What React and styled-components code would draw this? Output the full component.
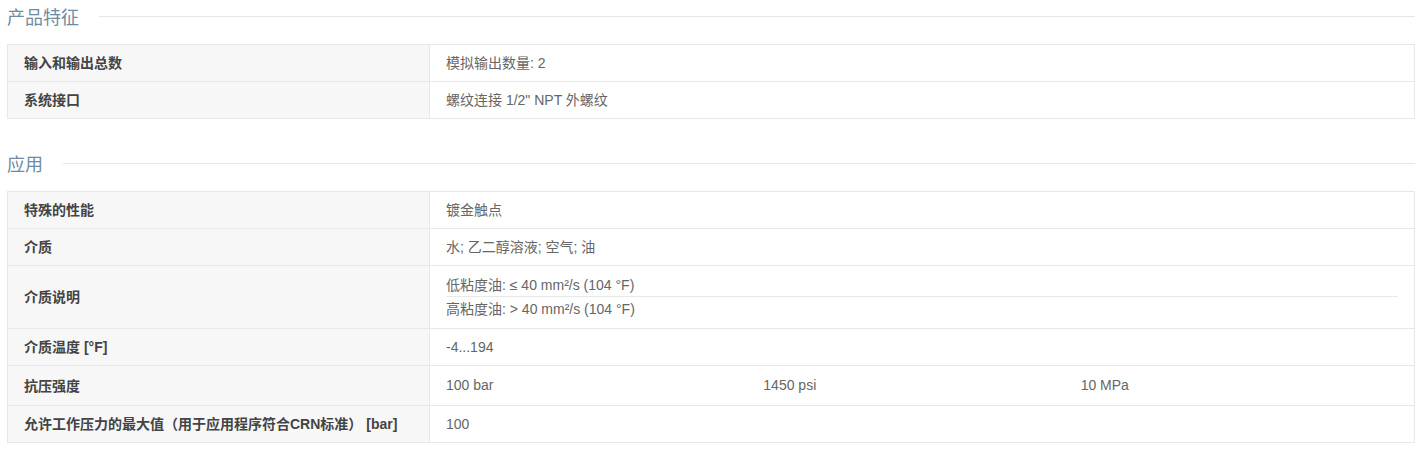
import styled, { createGlobalStyle } from "styled-components";

const GlobalStyle = createGlobalStyle`
  body {
    margin: 0;
    background: #fff;
    font-family: "Liberation Sans", "Noto Sans CJK SC", Arial, sans-serif;
  }
`;

const features = [
  { label: "输入和输出总数", values: ["模拟输出数量: 2"] },
  { label: "系统接口", values: ['螺纹连接 1/2" NPT 外螺纹'] },
];

const application = [
  { label: "特殊的性能", values: ["镀金触点"] },
  { label: "介质", values: ["水; 乙二醇溶液; 空气; 油"] },
  {
    label: "介质说明",
    values: ["低粘度油: ≤ 40 mm²/s (104 °F)", "高粘度油: > 40 mm²/s (104 °F)"],
  },
  { label: "介质温度 [°F]", values: ["-4...194"] },
  { label: "抗压强度", columns: ["100 bar", "1450 psi", "10 MPa"] },
  { label: "允许工作压力的最大值（用于应用程序符合CRN标准） [bar]", values: ["100"] },
];

const SpecTable = ({ rows }) => (
  <Table>
    {rows.map((row) => (
      <Row key={row.label}>
        <Label>{row.label}</Label>
        <Value>
          {row.columns ? (
            <Columns>
              {row.columns.map((c) => (
                <span key={c}>{c}</span>
              ))}
            </Columns>
          ) : row.values.length > 1 ? (
            row.values.map((v) => <SubValue key={v}>{v}</SubValue>)
          ) : (
            row.values[0]
          )}
        </Value>
      </Row>
    ))}
  </Table>
);

const App = () => {
  return (
    <Page>
      <GlobalStyle />
      <Section>
        <Heading>
          <span>产品特征</span>
        </Heading>
        <SpecTable rows={features} />
      </Section>
      <Section>
        <Heading>
          <span>应用</span>
        </Heading>
        <SpecTable rows={application} />
      </Section>
    </Page>
  );
};
export default App;

const Page = styled.div`
  width: 1408px;
  padding-left: 7px;
`;

const Section = styled.section`
  & + & {
    margin-top: 28px;
  }
`;

const Heading = styled.h2`
  display: flex;
  align-items: center;
  gap: 20px;
  height: 32px;
  margin: 0 0 12px;
  font-size: 18px;
  font-weight: normal;
  color: #6e8ba3;

  &::after {
    content: "";
    flex: 1;
    height: 1px;
    background: #e6e6e6;
  }
`;

const Table = styled.div`
  border-left: 1px solid #e8e8e8;
  border-right: 1px solid #e8e8e8;
  border-bottom: 1px solid #e8e8e8;
`;

const Row = styled.div`
  display: grid;
  grid-template-columns: 422px 1fr;
  border-top: 1px solid #e8e8e8;
  font-size: 14px;
  line-height: 20px;
`;

const Label = styled.div`
  display: flex;
  align-items: center;
  padding: 8px 16px;
  background: #f7f7f7;
  border-right: 1px solid #e8e8e8;
  font-weight: bold;
  color: #444;
`;

const Value = styled.div`
  display: flex;
  flex-direction: column;
  justify-content: center;
  padding: 8px 16px;
  color: #666;
`;

const SubValue = styled.div`
  line-height: 22px;

  & + & {
    padding-top: 1px;
    border-top: 1px solid #e8e8e8;
  }
`;

const Columns = styled.div`
  display: grid;
  grid-template-columns: repeat(3, 1fr);
  padding: 1px 0 2px;
`;
